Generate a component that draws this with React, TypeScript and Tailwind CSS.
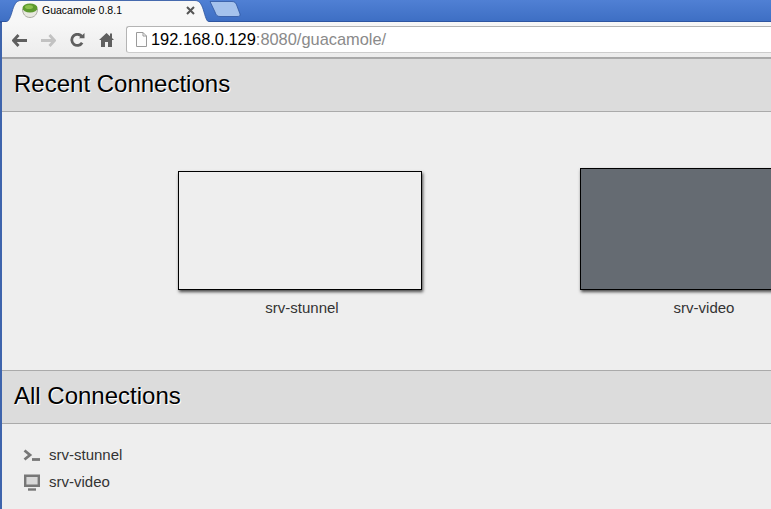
const sans = "font-['Liberation_Sans',Arial,sans-serif]";

function Section({ title }: { title: string }) {
  return (
    <div className="h-[54px] shrink-0 flex items-center pl-[12px] pb-[2px] bg-[#dcdcdc] border-t border-b border-[#aaaaaa]">
      <h1 className="text-[24px] leading-none text-black [text-shadow:1px_1px_0_#ffffff]">{title}</h1>
    </div>
  );
}

function Thumbnail({ name, className }: { name: string; className: string }) {
  return (
    <div className="w-[402px] shrink-0 flex flex-col items-center">
      <div className={`w-[244px] border border-black shadow-[1px_2px_3px_rgba(0,0,0,0.7)] ${className}`} />
      <div className="mt-[10px] pl-[4px] text-[15px] leading-[16px] text-[#333333]">{name}</div>
    </div>
  );
}

function Guac() {
  return (
    <svg width="16" height="15" viewBox="0 0 16 15" className="shrink-0">
      <path d="M.5 6c0 5 3 8.500 7.500 8.500S15.500 11 15.500 6z" fill="#e8e8e0" stroke="#9a9a90" strokeWidth="0.8" />
      <ellipse cx="8" cy="5" rx="7.500" ry="4.500" fill="#5d9a2e" />
      <ellipse cx="7" cy="4" rx="4" ry="2" fill="#8cc04d" />
    </svg>
  );
}

function Toolbar() {
  return (
    <div className="h-[36px] shrink-0 flex items-start bg-gradient-to-b from-[#f7f7f7] to-[#ececec] border-b border-[#a8a8a8] relative">
      <div className="w-[124px] shrink-0 flex items-center pl-[10px] gap-[14px] pt-[11px]">
        <svg width="15" height="13" viewBox="0 0 15 13">
          <path d="M6.500 1 1.500 6.500 6.500 12M2 6.500h13" fill="none" stroke="#5f5f5f" strokeWidth="2.800" />
        </svg>
        <svg width="15" height="13" viewBox="0 0 15 13">
          <path d="M8.500 1l5 5.500-5 5.500M13 6.500H0" fill="none" stroke="#c2c2c2" strokeWidth="2.800" />
        </svg>
        <svg width="15" height="14" viewBox="0 0 16 15">
          <path d="M13 10.500A6 6 0 1 1 12.500 3.500" fill="none" stroke="#5f5f5f" strokeWidth="3" />
          <path d="M9.500 5.500H15.500V0z" fill="#5f5f5f" />
        </svg>
        <svg width="15" height="15" viewBox="0 0 15 15" className="-mt-[2px]">
          <path d="M0 8 7.500 1 11 4.200V1.500H13V6L15 8H13V15H9V10H6V15H2V8z" fill="#5f5f5f" />
        </svg>
      </div>
      <div className="h-[27px] mt-[4px] flex-1 flex items-center pl-[8px] bg-white border border-[#b4b4b4] border-b-[#cccccc] border-r-0 rounded-l-[3px]">
        <svg width="12" height="15" viewBox="0 0 12 15" className="shrink-0">
          <path d="M1.500.500H8L11.500 4V14.500H1.500zM8 .500V4H11.500" fill="#fdfdfd" stroke="#9a9a9a" />
        </svg>
        <span className="ml-[4px] text-[16.4px] leading-none text-black whitespace-nowrap">
          192.168.0.129<span className="text-[#8a8a8a]">:8080/guacamole/</span>
        </span>
      </div>
    </div>
  );
}

function TabStrip() {
  return (
    <div className="h-[22px] shrink-0 relative bg-gradient-to-b from-[#5080d4] to-[#3e6fc4] border-b border-[#2f55a0]">
      <svg width="242" height="23" viewBox="0 0 242 23" className="absolute left-0 top-0">
        <path d="M0 22.500H4C8 22.500 10 19 12 12 14 5 16 .500 21 .500H195C200 .500 202 5 204 12 206 19 207 22.500 211 22.500H0z" fill="#f7f7f7" stroke="#2f55a0" strokeWidth="0.8" />
        <path d="M210 1.500H232C235 1.500 236 3 237 6L240 14C240.500 16 239 16.500 237 16.500H220C217 16.500 216 15 215 12z" fill="#a5c2ec" stroke="#2f55a0" strokeWidth="0.8" />
      </svg>
      <div className="absolute left-[22px] top-[3px] flex items-center gap-[4px]">
        <Guac />
        <span className="text-[10.5px] leading-[15px] text-black whitespace-nowrap">Guacamole 0.8.1</span>
      </div>
      <svg width="9" height="9" viewBox="0 0 9 9" className="absolute left-[186px] top-[6px]">
        <path d="M1 1l7 7M8 1L1 8" stroke="#555555" strokeWidth="2" />
      </svg>
    </div>
  );
}

export default function App() {
  return (
    <div className={`h-[509px] w-[771px] overflow-hidden flex flex-col bg-[#eeeeee] ${sans}`}>
      <TabStrip />
      <div className="flex-1 min-h-0 flex border-l-2 border-[#3e64ac]">
        <div className="flex-1 min-w-0 flex flex-col">
          <Toolbar />
          <Section title="Recent Connections" />
          <div className="h-[258px] shrink-0 flex items-end pl-[97px] pb-[54px] overflow-hidden">
            <Thumbnail name="srv-stunnel" className="h-[119px] bg-[#eeeeee]" />
            <Thumbnail name="srv-video" className="h-[122px] bg-[#656b72]" />
          </div>
          <Section title="All Connections" />
          <div className="pt-[18px] pl-[20px] flex flex-col text-[15px] text-[#333333]">
            <div className="h-[27px] flex items-center gap-[9px]">
              <svg width="18" height="16" viewBox="0 0 18 16">
                <path d="M2.500 2.500 8 7 2.500 11.500" fill="none" stroke="#777777" strokeWidth="2.800" />
                <path d="M10 11.500h8" stroke="#777777" strokeWidth="2.800" />
              </svg>
              <span>srv-stunnel</span>
            </div>
            <div className="h-[27px] flex items-center gap-[9px]">
              <svg width="18" height="17" viewBox="0 0 18 17">
                <path d="M3.200 1.700h13.600v10H3.200z" fill="#d8d8d8" stroke="#777777" strokeWidth="2.400" />
                <path d="M6 15.500h8" stroke="#777777" strokeWidth="2.400" />
              </svg>
              <span>srv-video</span>
            </div>
          </div>
        </div>
      </div>
    </div>
  );
}
